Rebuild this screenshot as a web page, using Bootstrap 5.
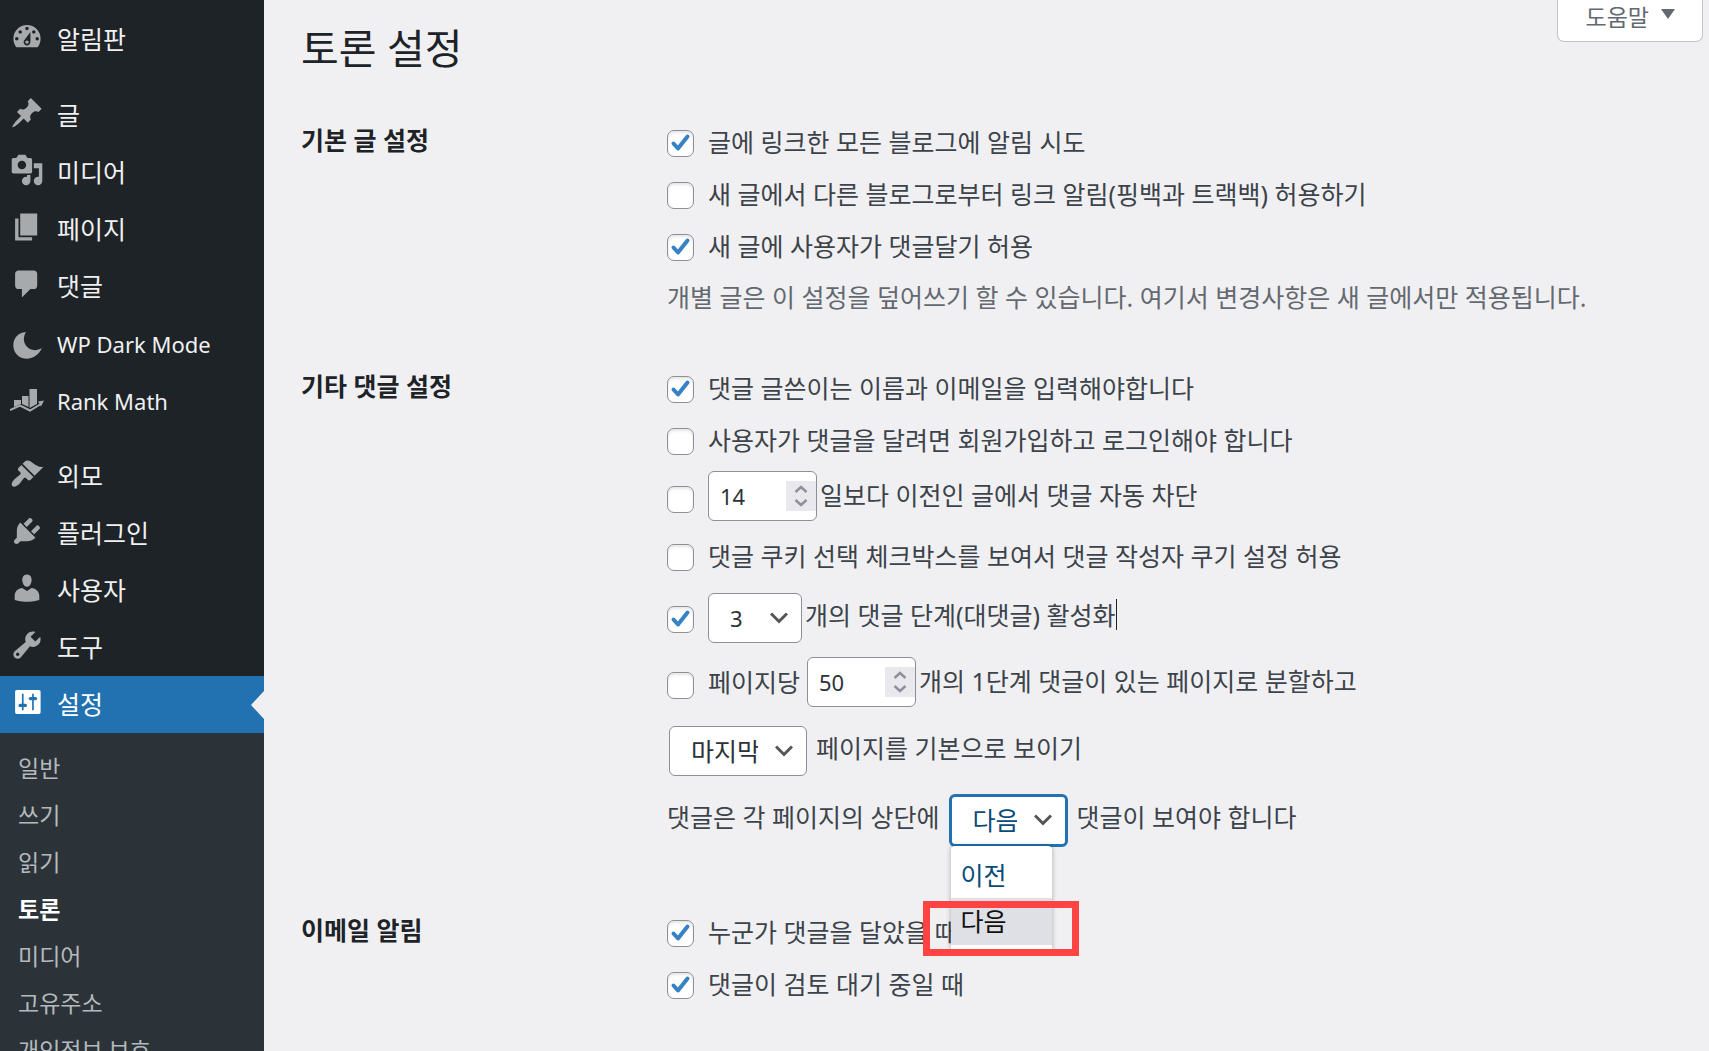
<!DOCTYPE html>
<html lang="ko">
<head>
<meta charset="utf-8">
<meta name="viewport" content="width=device-width, initial-scale=1">
<title>토론 설정</title>
<link href="https://cdn.jsdelivr.net/npm/bootstrap@5.3.0/dist/css/bootstrap.min.css" rel="stylesheet">
<style>
  body { background: #f0f0f2; color: #3c434a; font: 25px/36px "Noto Sans", "Noto Sans CJK KR", sans-serif; }
  a { text-decoration: none; }
  .admin-shell { height: 100vh; overflow: hidden; }

  .admin-menu { width: 264px; background: #1d2327; padding-top: 11px; overflow: hidden; }
  .menu-entry { height: 57px; padding: 0 0 1px 10px; gap: 13px; color: #f0f0f1; position: relative; }
  .menu-entry:hover { color: #72aee6; }
  .menu-entry svg { width: 34px; height: 34px; fill: #a7aaad; flex: none; margin-bottom: 4px; }
  .menu-gap { margin-top: 19px; }
  .menu-latin { font-size: 22px; padding-bottom: 0; }
  .menu-latin svg { margin-bottom: 2px; }
  .menu-entry.active { background: #2271b1; color: #fff; }
  .menu-entry.active svg { fill: #fff; }
  .menu-entry.active::after { content: ""; position: absolute; right: 0; top: 50%; margin-top: -14px; border: 14px solid transparent; border-left: 0; border-right: 13px solid #f0f0f2; }
  .menu-sub { background: #2c3338; padding: 11px 0 11px 18px; font-size: 23px; }
  .menu-sub a { height: 47px; color: #b4b9be; white-space: nowrap; }
  .menu-sub a.active { color: #fff; font-weight: 700; }

  .admin-main { padding-left: 37px; }
  .page-title { font-size: 41px; line-height: 48px; font-weight: 400; color: #1d2327; padding-top: 24px; margin-bottom: 45px; }
  .help-tab { background: #fff; border: 1px solid #c3c4c7; border-top: 0; border-radius: 0 0 7px 7px; height: 42px; padding: 0 27px 8px 28px; margin-right: 6px; color: #646970; font-size: 23px; line-height: 30px; gap: 12px; }
  .help-tab svg { width: 14px; height: 10px; fill: #646970; margin-bottom: 5px; }

  .set-section { margin-bottom: 42px; }
  .set-title { width: 366px; flex: none; font-size: 25px; line-height: 47px; font-weight: 700; color: #1d2327; margin: 0; }
  .set-row { height: 52px; gap: 14px; white-space: nowrap; }
  .set-row.tall { height: 58px; }
  .set-row label, .set-row .txt { padding-bottom: 3px; }
  .set-row.pick label, .set-row.pick .txt { padding-bottom: 7px; }
  .set-row .form-check-input { width: 27px; height: 27px; margin: 0; flex: none; background-color: #fff; border: 1px solid #8c8f94; border-radius: 7px; box-shadow: inset 0 2px 3px rgba(0,0,0,.1); }
  .set-row.tall .form-check-input { margin-top: 6px; }
  .set-row.tall.pick .form-check-input { margin-top: 2px; }
  .set-row .form-check-input:checked { background-color: #fff; border-color: #8c8f94; background-size: 27px 27px; background-position: center; background-image: url("data:image/svg+xml,%3Csvg xmlns='http://www.w3.org/2000/svg' viewBox='0 0 27 27'%3E%3Cpath d='M6.500 13.500L11 18.500L20.500 6.500' fill='none' stroke='%233582c4' stroke-width='4' stroke-linecap='round' stroke-linejoin='round'/%3E%3C/svg%3E"); }
  .set-note { line-height: 48px; color: #646970; margin: 0; white-space: nowrap; }
  .mid { margin: 6px 0; }
  .late { margin-top: 11px; }
  .tight { gap: 3px; }
  .loose { gap: 9px !important; }

  .set-row .form-control, .set-row .form-select { height: 50px; border: 1px solid #8c8f94; border-radius: 6px; background-color: #fff; color: #2c3338; font-size: 25px; line-height: 36px; }
  .set-row .form-control { width: 109px; padding: 0 36px 0 11px; font-size: 22px; appearance: textfield; -moz-appearance: textfield; background: #fff url("data:image/svg+xml,%3Csvg xmlns='http://www.w3.org/2000/svg' viewBox='0 0 30 30'%3E%3Cpath d='M0 0H30V30H0z' fill='%23e9e9ed'/%3E%3Cpath d='M9.500 11L15 6l5.500 5M9.500 19l5.500 5 5.500-5' fill='none' stroke='%238f8f9d' stroke-width='2.500'/%3E%3C/svg%3E") no-repeat right center / 30px 30px; }
  .set-row .form-control::-webkit-inner-spin-button { appearance: none; -webkit-appearance: none; margin: 0; }
  .set-row .form-select { width: auto; padding: 0 48px 0 21px; background-size: 18px 12px; background-position: right 13px center; background-image: url("data:image/svg+xml,%3Csvg xmlns='http://www.w3.org/2000/svg' viewBox='0 0 18 12'%3E%3Cpath d='M1 1.500L9 9.500L17 1.500' fill='none' stroke='%23555' stroke-width='3'/%3E%3C/svg%3E"); }
  .set-row .pick-level { width: 94px; font-size: 22px; }
  .set-row .pick-page { width: 138px; margin-left: 2px; }
  .set-row .pick-order { width: 119px; height: 53px; border: 3px solid #2271b1; color: #0a4b78; }
  .caret-bar { border-right: 1px solid #1d2327; height: 31px; margin-bottom: 8px; }

  .pick-list { position: absolute; z-index: 2; top: 52px; left: 2px; width: 101px; height: 104px; background: #fff; border-radius: 4px 4px 0 0; box-shadow: 0 0 5px rgba(0,0,0,.3); color: #0a4b78; margin: 0; padding: 0; }
  .pick-list li { height: 47px; padding-left: 10px; line-height: 46px; }
  .pick-list li:first-child { height: 52px; line-height: 58px; }
  .pick-list li.chosen { background: #dfdfe6; color: #111; }
  .red-frame { position: absolute; z-index: 3; top: 107px; left: -26px; width: 156px; height: 55px; border: 7px solid #ff4242; }
</style>
<script src="https://cdn.jsdelivr.net/npm/bootstrap@5.3.0/dist/js/bootstrap.bundle.min.js"></script>
</head>
<body>
<div class="admin-shell d-flex">
  <nav class="admin-menu flex-shrink-0" aria-label="관리 메뉴">
    <a href="#" class="menu-entry d-flex align-items-center"><svg viewBox="0 0 20 20"><path d="M3.760 16h12.480c1.090-1.370 1.760-3.110 1.760-5 0-4.420-3.580-8-8-8s-8 3.580-8 8c0 1.890.67 3.630 1.760 5zM10 4c.55 0 1 .45 1 1s-.45 1-1 1-1-.45-1-1 .45-1 1-1zM6 6c.55 0 1 .45 1 1s-.45 1-1 1-1-.45-1-1 .45-1 1-1zm8 0c.55 0 1 .45 1 1s-.45 1-1 1-1-.45-1-1 .45-1 1-1zm-5.370 5.550L12 7v6c0 1.100-.9 2-2 2s-2-.9-2-2c0-.57.24-1.080.63-1.450zM4 10c.55 0 1 .45 1 1s-.45 1-1 1-1-.45-1-1 .45-1 1-1zm12 0c.55 0 1 .45 1 1s-.45 1-1 1-1-.45-1-1 .45-1 1-1zm-5 3c0-.55-.45-1-1-1s-1 .45-1 1 .45 1 1 1 1-.45 1-1z"/></svg>알림판</a>
    <a href="#" class="menu-entry menu-gap d-flex align-items-center"><svg viewBox="0 0 20 20"><path d="M10.440 3.020l1.820-1.820 6.360 6.350-1.830 1.820c-1.050-.68-2.480-.57-3.410.36l-.75.75c-.92.93-1.040 2.350-.35 3.410l-1.830 1.820-2.410-2.410-2.800 2.790c-.42.42-3.380 2.710-3.800 2.290s1.860-3.390 2.280-3.810l2.790-2.790L4.100 9.360l1.830-1.820c1.050.69 2.480.57 3.400-.36l.75-.75c.93-.92 1.050-2.350.36-3.410z"/></svg>글</a>
    <a href="#" class="menu-entry d-flex align-items-center"><svg viewBox="0 0 20 20"><path d="M13 11V4c0-.55-.45-1-1-1h-1.670L9 1H5L3.670 3H2c-.55 0-1 .45-1 1v7c0 .55.45 1 1 1h10c.55 0 1-.45 1-1zM7 4.500c1.380 0 2.500 1.120 2.500 2.500S8.380 9.500 7 9.500 4.500 8.380 4.500 7 5.620 4.500 7 4.500zM14 6h5v10.500c0 1.380-1.120 2.500-2.500 2.500S14 17.880 14 16.500s1.120-2.500 2.500-2.500c.17 0 .34.02.5.05V9h-3V6zm-4 8.050V13h2v3.500c0 1.380-1.120 2.500-2.500 2.500S7 17.880 7 16.500 8.120 14 9.500 14c.17 0 .34.02.5.05z"/></svg>미디어</a>
    <a href="#" class="menu-entry d-flex align-items-center"><svg viewBox="0 0 20 20"><path d="M6 15V2h10v13H6zm-1 1h8v2H3V5h2v11z"/></svg>페이지</a>
    <a href="#" class="menu-entry d-flex align-items-center"><svg viewBox="0 0 20 20"><path d="M5 2h9c1.100 0 2 .9 2 2v7c0 1.100-.9 2-2 2h-2l-5 5v-5H5c-1.100 0-2-.9-2-2V4c0-1.100.9-2 2-2z"/></svg>댓글</a>
    <a href="#" class="menu-entry menu-latin d-flex align-items-center"><svg viewBox="0 0 34 34"><path d="M16 6C5.500 6.500 .5 17 5 26c5 9.500 21 9.500 27-4C20.500 29 9 17.500 16 6z"/></svg>WP Dark Mode</a>
    <a href="#" class="menu-entry menu-latin d-flex align-items-center"><svg viewBox="0 0 34 34"><path d="M4 17h7v4L4 24zM12 13h6.500v11L12 21zM19.500 6H27v15l-7.500 4z"/><path d="M0 27l10-4.500 10 5 11-6.500" fill="none" stroke="#a7aaad" stroke-width="2"/><path d="M28 18.500l6-1-3 6z"/></svg>Rank Math</a>
    <a href="#" class="menu-entry menu-gap d-flex align-items-center"><svg viewBox="0 0 20 20"><path d="M14.480 11.060L7.410 3.990l1.500-1.500c.5-.56 2.300-.47 3.510.32 1.210.8 1.430 1.280 2.910 2.100 1.180.64 2.450 1.260 4.450.85zm-.71.71L6.700 4.700 4.930 6.470c-.39.39-.39 1.020 0 1.410l1.060 1.060c.39.39.39 1.030 0 1.420-.6.6-1.430 1.110-2.210 1.690-.35.26-.7.53-1.010.84C1.430 14.230.4 16.080 1.400 17.070c.99 1 2.840-.03 4.180-1.360.31-.31.58-.66.85-1.020.57-.78 1.080-1.610 1.690-2.210.39-.39 1.020-.39 1.410 0l1.060 1.060c.39.39 1.020.39 1.410 0z"/></svg>외모</a>
    <a href="#" class="menu-entry d-flex align-items-center"><svg viewBox="0 0 20 20"><path d="M13.110 4.360L9.870 7.600 8 5.730l3.240-3.240c.35-.34 1.050-.2 1.560.32.52.51.66 1.210.31 1.550zm-8 1.770l.91-1.120 9.010 9.010-1.190.84c-.71.71-2.630 1.160-3.820 1.160H6.140L4.900 17.260c-.59.59-1.540.59-2.120 0-.59-.58-.59-1.530 0-2.120l1.240-1.240v-3.880c0-1.130.4-3.190 1.090-3.890zm7.260 3.970l3.240-3.240c.34-.35 1.040-.21 1.550.31.52.51.66 1.210.31 1.550l-3.240 3.250z"/></svg>플러그인</a>
    <a href="#" class="menu-entry d-flex align-items-center"><svg viewBox="0 0 20 20"><path d="M10 9.250c-2.270 0-2.730-3.440-2.730-3.440C7 4.020 7.820 2 9.970 2c2.160 0 2.980 2.020 2.710 3.810 0 0-.41 3.440-2.680 3.440zm0 2.570L12.720 10c2.390 0 4.520 2.330 4.520 4.530v2.490s-3.650 1.130-7.240 1.130c-3.650 0-7.240-1.130-7.240-1.130v-2.490c0-2.250 1.940-4.480 4.470-4.480z"/></svg>사용자</a>
    <a href="#" class="menu-entry d-flex align-items-center"><svg viewBox="0 0 20 20"><path d="M16.680 9.770c-1.340 1.340-3.300 1.670-4.950.99l-5.410 6.520c-.99.99-2.590.99-3.580 0s-.99-2.590 0-3.570l6.520-5.420c-.68-1.650-.35-3.610.99-4.950 1.280-1.280 3.120-1.620 4.720-1.060l-2.890 2.890 2.820 2.820 2.860-2.870c.53 1.580.18 3.390-1.080 4.650zM3.810 16.210c.4.39 1.040.39 1.430 0 .4-.4.4-1.040 0-1.430-.39-.4-1.030-.4-1.430 0-.39.39-.39 1.030 0 1.430z"/></svg>도구</a>
    <a href="#" class="menu-entry active d-flex align-items-center" aria-current="true"><svg viewBox="0 0 20 20"><path d="M18 16V4c0-.55-.45-1-1-1H4c-.55 0-1 .45-1 1v12c0 .55.45 1 1 1h13c.55 0 1-.45 1-1zM8 11h1c.55 0 1 .45 1 1s-.45 1-1 1H8v1.500c0 .28-.22.5-.5.5s-.5-.22-.5-.5V13H6c-.55 0-1-.45-1-1s.45-1 1-1h1V5.500c0-.28.22-.5.5-.5s.5.22.5.5V11zm5-2h-1c-.55 0-1-.45-1-1s.45-1 1-1h1V5.500c0-.28.22-.5.5-.5s.5.22.5.5V7h1c.55 0 1 .45 1 1s-.45 1-1 1h-1v5.500c0 .28-.22.5-.5.5s-.5-.22-.5-.5V9z"/></svg>설정</a>
    <div class="menu-sub">
      <a href="#" class="d-flex align-items-center">일반</a>
      <a href="#" class="d-flex align-items-center">쓰기</a>
      <a href="#" class="d-flex align-items-center">읽기</a>
      <a href="#" class="d-flex align-items-center active" aria-current="page">토론</a>
      <a href="#" class="d-flex align-items-center">미디어</a>
      <a href="#" class="d-flex align-items-center">고유주소</a>
      <a href="#" class="d-flex align-items-center">개인정보 보호</a>
    </div>
  </nav>

  <main class="admin-main flex-grow-1">
    <header class="d-flex justify-content-between align-items-start">
      <h1 class="page-title">토론 설정</h1>
      <button type="button" class="help-tab d-flex align-items-center">도움말 <svg viewBox="0 0 14 10"><path d="M0 0h14L7 10z"/></svg></button>
    </header>

    <form>
      <section class="set-section d-flex">
        <h2 class="set-title">기본 글 설정</h2>
        <div class="flex-grow-1">
          <div class="set-row d-flex align-items-center"><input class="form-check-input" type="checkbox" id="pingback" checked><label for="pingback">글에 링크한 모든 블로그에 알림 시도</label></div>
          <div class="set-row d-flex align-items-center"><input class="form-check-input" type="checkbox" id="trackback"><label for="trackback">새 글에서 다른 블로그로부터 링크 알림(핑백과 트랙백) 허용하기</label></div>
          <div class="set-row d-flex align-items-center"><input class="form-check-input" type="checkbox" id="allow" checked><label for="allow">새 글에 사용자가 댓글달기 허용</label></div>
          <p class="set-note">개별 글은 이 설정을 덮어쓰기 할 수 있습니다. 여기서 변경사항은 새 글에서만 적용됩니다.</p>
        </div>
      </section>

      <section class="set-section d-flex pb-3">
        <h2 class="set-title">기타 댓글 설정</h2>
        <div class="flex-grow-1">
          <div class="set-row d-flex align-items-center"><input class="form-check-input" type="checkbox" id="name-mail" checked><label for="name-mail">댓글 글쓴이는 이름과 이메일을 입력해야합니다</label></div>
          <div class="set-row d-flex align-items-center"><input class="form-check-input" type="checkbox" id="signup"><label for="signup">사용자가 댓글을 달려면 회원가입하고 로그인해야 합니다</label></div>
          <div class="set-row tall d-flex align-items-center"><input class="form-check-input" type="checkbox" id="close-old" aria-label="오래된 글 댓글 차단"><div class="d-flex align-items-center tight"><input class="form-control" type="number" id="close-days" value="14"><label for="close-days">일보다 이전인 글에서 댓글 자동 차단</label></div></div>
          <div class="set-row mid d-flex align-items-center"><input class="form-check-input" type="checkbox" id="cookie"><label for="cookie">댓글 쿠키 선택 체크박스를 보여서 댓글 작성자 쿠기 설정 허용</label></div>
          <div class="set-row tall pick d-flex align-items-center"><input class="form-check-input" type="checkbox" id="thread" aria-label="댓글 단계" checked><div class="d-flex align-items-center tight"><select class="form-select pick-level" id="depth"><option>3</option></select><div class="d-flex align-items-center"><label for="depth">개의 댓글 단계(대댓글) 활성화</label><span class="caret-bar"></span></div></div></div>
          <div class="set-row tall mid d-flex align-items-center"><input class="form-check-input" type="checkbox" id="paged"><div class="d-flex align-items-center tight"><label class="pe-1 pb-0" for="paged">페이지당</label><input class="form-control" type="number" id="per-page" value="50"><label for="per-page">개의 1단계 댓글이 있는 페이지로 분할하고</label></div></div>
          <div class="set-row tall late pick d-flex align-items-center loose"><select class="form-select pick-page" id="def-page"><option>마지막</option></select><label for="def-page">페이지를 기본으로 보이기</label></div>
          <div class="set-row tall late pick d-flex align-items-center loose">
            <label for="order">댓글은 각 페이지의 상단에</label>
            <div class="position-relative">
              <select class="form-select pick-order" id="order"><option>다음</option></select>
              <ul class="pick-list list-unstyled"><li>이전</li><li class="chosen">다음</li></ul>
              <div class="red-frame"></div>
            </div>
            <span class="txt">댓글이 보여야 합니다</span>
          </div>
        </div>
      </section>

      <section class="set-section d-flex">
        <h2 class="set-title">이메일 알림</h2>
        <div class="flex-grow-1">
          <div class="set-row d-flex align-items-center"><input class="form-check-input" type="checkbox" id="mail-new" checked><label for="mail-new">누군가 댓글을 달았을 때</label></div>
          <div class="set-row d-flex align-items-center"><input class="form-check-input" type="checkbox" id="mail-hold" checked><label for="mail-hold">댓글이 검토 대기 중일 때</label></div>
        </div>
      </section>
    </form>
  </main>
</div>
</body>
</html>
